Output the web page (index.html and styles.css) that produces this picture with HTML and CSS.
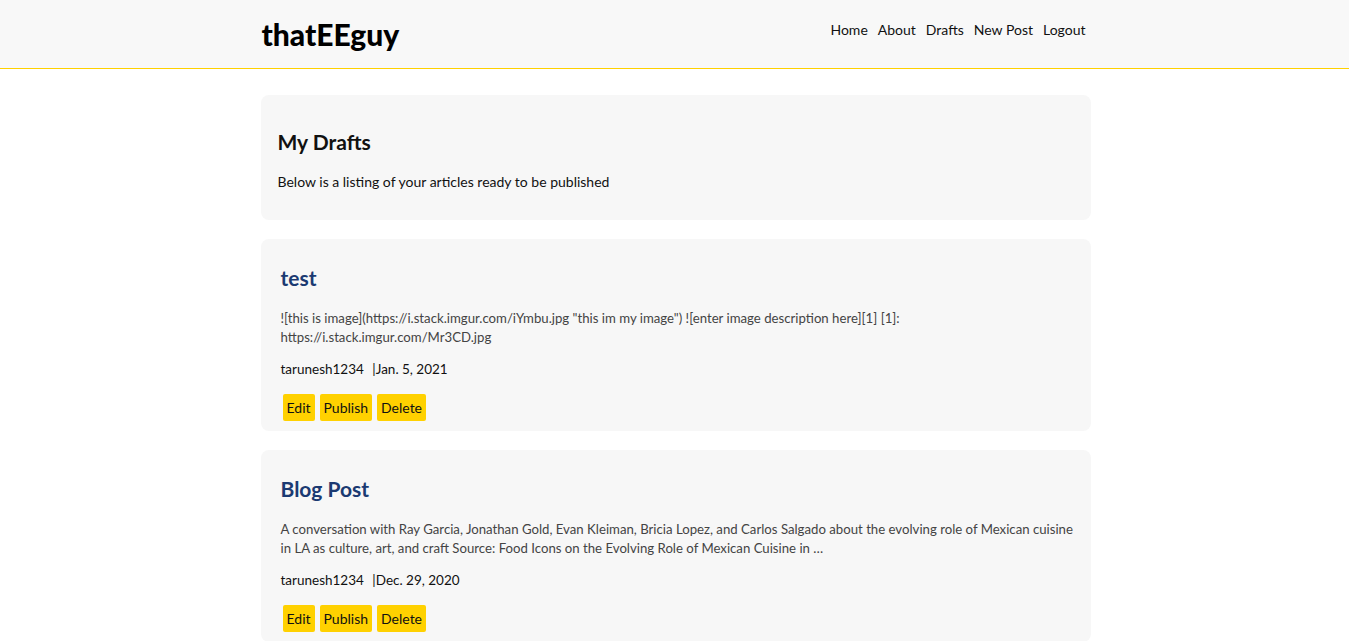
FILE: index.html
```html
<!DOCTYPE html>
<html lang="en">
<head>
<meta charset="utf-8">
<title>thatEEguy - Drafts</title>
<link rel="stylesheet" href="styles.css">
</head>
<body>
<header class="site-header">
  <div class="container header-inner">
    <a class="brand" href="#">thatEEguy</a>
    <nav class="nav">
      <a href="#">Home</a>
      <a href="#">About</a>
      <a href="#">Drafts</a>
      <a href="#">New Post</a>
      <a href="#">Logout</a>
    </nav>
  </div>
</header>
<main class="container main">
  <section class="card intro">
    <h2 class="intro-title">My Drafts</h2>
    <p class="intro-text">Below is a listing of your articles ready to be published</p>
  </section>
  <article class="card post">
    <h2 class="post-title">test</h2>
    <p class="post-body">![this is image](https://i.stack.imgur.com/iYmbu.jpg "this im my image") ![enter image description here][1] [1]: https://i.stack.imgur.com/Mr3CD.jpg</p>
    <p class="post-meta">tarunesh1234 <span class="sep">|</span>Jan. 5, 2021</p>
    <div class="actions">
      <a class="btn" href="#">Edit</a>
      <a class="btn" href="#">Publish</a>
      <a class="btn" href="#">Delete</a>
    </div>
  </article>
  <article class="card post">
    <h2 class="post-title">Blog Post</h2>
    <p class="post-body">A conversation with Ray Garcia, Jonathan Gold, Evan Kleiman, Bricia Lopez, and Carlos Salgado about the evolving role of Mexican cuisine in LA as culture, art, and craft Source: Food Icons on the Evolving Role of Mexican Cuisine in …</p>
    <p class="post-meta">tarunesh1234 <span class="sep">|</span>Dec. 29, 2020</p>
    <div class="actions">
      <a class="btn" href="#">Edit</a>
      <a class="btn" href="#">Publish</a>
      <a class="btn" href="#">Delete</a>
    </div>
  </article>
</main>
</body>
</html>
```
FILE: styles.css
```css
* { box-sizing: border-box; }
body {
  margin: 0;
  font-family: "Lato", "Open Sans", sans-serif;
  color: #111;
  background: #fff;
}
a { color: inherit; text-decoration: none; }
.container {
  width: 830px;
  margin-left: calc(50% - 414px);
}
.site-header {
  background: #f8f8f8;
  border-bottom: 1px solid #ffd100;
  height: 69px;
}
.header-inner {
  display: flex;
  align-items: center;
  justify-content: space-between;
  height: 68px;
  padding: 0 5px 0 1px;
}
.brand {
  font-weight: 900;
  font-size: 30px;
  color: #000;
}
.nav {
  display: flex;
  gap: 10px;
  font-size: 14px;
  color: #111;
  align-self: flex-start;
  padding-top: 21px;
}
.main {
  padding-top: 26px;
  display: flex;
  flex-direction: column;
  gap: 19px;
}
.card {
  background: #f7f7f7;
  border-radius: 8px;
}
.intro {
  padding: 33px 17px 28px;
  height: 125px;
}
.intro-title {
  margin: 0;
  font-size: 21px;
  font-weight: 700;
  line-height: 28px;
}
.intro-text {
  margin: 16px 0 0;
  font-size: 14px;
  line-height: 20px;
}
.post {
  padding: 25px 12px 10px 20px;
  height: 192px;
}
.post-title {
  margin: 0;
  font-size: 21px;
  font-weight: 700;
  color: #1b3a72;
  line-height: 28px;
}
.post-body {
  margin: 17px 0 0;
  font-size: 13.2px;
  line-height: 19px;
  color: #444;
}
.post-meta {
  margin: 12px 0 0;
  font-size: 13.5px;
  line-height: 20px;
  color: #111;
}
.sep { margin-left: 5px; }
.actions {
  display: flex;
  gap: 5px;
  margin-top: 15px;
  padding-left: 2px;
}
.btn {
  background: #ffd100;
  border-radius: 2px;
  font-size: 14px;
  line-height: 27px;
  height: 27px;
  padding: 0 4px;
  color: #111;
}
```
